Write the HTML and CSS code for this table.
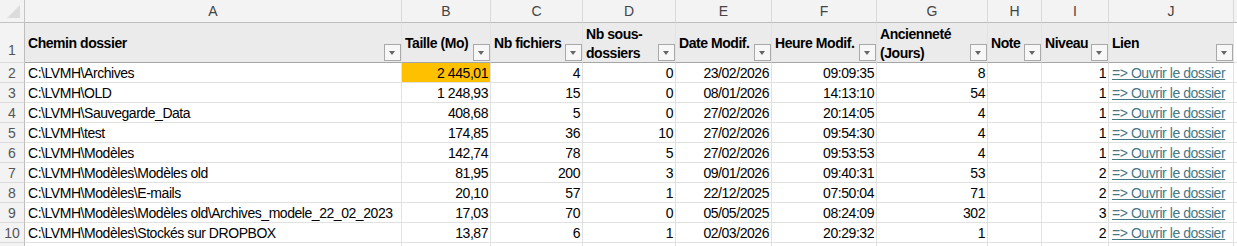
FILE: index.html
```html
<!DOCTYPE html>
<html lang="fr">
<head>
<meta charset="utf-8">
<link rel="stylesheet" href="styles.css">
</head>
<body>
<div class="sheet">
  <div class="corner"><span class="tri"></span></div>
  <div class="ch">A</div><div class="ch">B</div><div class="ch">C</div><div class="ch">D</div><div class="ch">E</div><div class="ch">F</div><div class="ch">G</div><div class="ch">H</div><div class="ch">I</div><div class="ch">J</div><div class="ch last"></div>

  <div class="rh rh1">1</div>
  <div class="th"><span class="lbl">Chemin dossier</span><span class="flt"></span></div>
  <div class="th"><span class="lbl">Taille (Mo)</span><span class="flt"></span></div>
  <div class="th"><span class="lbl">Nb fichiers</span><span class="flt"></span></div>
  <div class="th"><span class="lbl">Nb sous-<br>dossiers</span><span class="flt"></span></div>
  <div class="th"><span class="lbl">Date Modif.</span><span class="flt"></span></div>
  <div class="th"><span class="lbl">Heure Modif.</span><span class="flt"></span></div>
  <div class="th"><span class="lbl">Ancienneté<br>(Jours)</span><span class="flt"></span></div>
  <div class="th"><span class="lbl">Note</span><span class="flt"></span></div>
  <div class="th"><span class="lbl">Niveau</span><span class="flt"></span></div>
  <div class="th"><span class="lbl">Lien</span><span class="flt"></span></div>
  <div class="th last"></div>

  <div class="rh">2</div><div class="c">C:\LVMH\Archives</div><div class="c n hl">2 445,01</div><div class="c n">4</div><div class="c n">0</div><div class="c n">23/02/2026</div><div class="c n">09:09:35</div><div class="c n">8</div><div class="c"></div><div class="c n">1</div><div class="c"><a class="lk">=&gt; Ouvrir le dossier</a></div><div class="c last"></div>
  <div class="rh">3</div><div class="c">C:\LVMH\OLD</div><div class="c n">1 248,93</div><div class="c n">15</div><div class="c n">0</div><div class="c n">08/01/2026</div><div class="c n">14:13:10</div><div class="c n">54</div><div class="c"></div><div class="c n">1</div><div class="c"><a class="lk">=&gt; Ouvrir le dossier</a></div><div class="c last"></div>
  <div class="rh">4</div><div class="c">C:\LVMH\Sauvegarde_Data</div><div class="c n">408,68</div><div class="c n">5</div><div class="c n">0</div><div class="c n">27/02/2026</div><div class="c n">20:14:05</div><div class="c n">4</div><div class="c"></div><div class="c n">1</div><div class="c"><a class="lk">=&gt; Ouvrir le dossier</a></div><div class="c last"></div>
  <div class="rh">5</div><div class="c">C:\LVMH\test</div><div class="c n">174,85</div><div class="c n">36</div><div class="c n">10</div><div class="c n">27/02/2026</div><div class="c n">09:54:30</div><div class="c n">4</div><div class="c"></div><div class="c n">1</div><div class="c"><a class="lk">=&gt; Ouvrir le dossier</a></div><div class="c last"></div>
  <div class="rh">6</div><div class="c">C:\LVMH\Modèles</div><div class="c n">142,74</div><div class="c n">78</div><div class="c n">5</div><div class="c n">27/02/2026</div><div class="c n">09:53:53</div><div class="c n">4</div><div class="c"></div><div class="c n">1</div><div class="c"><a class="lk">=&gt; Ouvrir le dossier</a></div><div class="c last"></div>
  <div class="rh">7</div><div class="c">C:\LVMH\Modèles\Modèles old</div><div class="c n">81,95</div><div class="c n">200</div><div class="c n">3</div><div class="c n">09/01/2026</div><div class="c n">09:40:31</div><div class="c n">53</div><div class="c"></div><div class="c n">2</div><div class="c"><a class="lk">=&gt; Ouvrir le dossier</a></div><div class="c last"></div>
  <div class="rh">8</div><div class="c">C:\LVMH\Modèles\E-mails</div><div class="c n">20,10</div><div class="c n">57</div><div class="c n">1</div><div class="c n">22/12/2025</div><div class="c n">07:50:04</div><div class="c n">71</div><div class="c"></div><div class="c n">2</div><div class="c"><a class="lk">=&gt; Ouvrir le dossier</a></div><div class="c last"></div>
  <div class="rh">9</div><div class="c">C:\LVMH\Modèles\Modèles old\Archives_modele_22_02_2023</div><div class="c n">17,03</div><div class="c n">70</div><div class="c n">0</div><div class="c n">05/05/2025</div><div class="c n">08:24:09</div><div class="c n">302</div><div class="c"></div><div class="c n">3</div><div class="c"><a class="lk">=&gt; Ouvrir le dossier</a></div><div class="c last"></div>
  <div class="rh">10</div><div class="c">C:\LVMH\Modèles\Stockés sur DROPBOX</div><div class="c n">13,87</div><div class="c n">6</div><div class="c n">1</div><div class="c n">02/03/2026</div><div class="c n">20:29:32</div><div class="c n">1</div><div class="c"></div><div class="c n">2</div><div class="c"><a class="lk">=&gt; Ouvrir le dossier</a></div><div class="c last"></div>
  <div class="rh"></div><div class="c"></div><div class="c"></div><div class="c"></div><div class="c"></div><div class="c"></div><div class="c"></div><div class="c"></div><div class="c"></div><div class="c"></div><div class="c"></div><div class="c last"></div>
</div>
</body>
</html>
```

FILE: styles.css
```css
html, body {
  margin: 0;
  padding: 0;
  background: #ffffff;
}
body {
  font-family: "Liberation Sans", Arial, sans-serif;
  font-size: 14px;
  letter-spacing: -0.45px;
  color: #000;
  overflow: hidden;
}
.sheet {
  display: grid;
  grid-template-columns: 25px 377px 89px 92px 93px 96px 105px 111px 54px 67px 125px 1fr;
  grid-template-rows: 23px 40px repeat(9, 20px) 20px;
  width: 1237px;
  height: 246px;
  overflow: hidden;
}
.sheet > div {
  box-sizing: border-box;
  overflow: hidden;
  white-space: nowrap;
}
.corner {
  background: #f3f3f3;
  border-right: 1px solid #c4c4c4;
  border-bottom: 1px solid #c4c4c4;
  position: relative;
}
.tri {
  position: absolute;
  right: 4px;
  bottom: 4px;
  width: 0;
  height: 0;
  border-left: 13px solid transparent;
  border-bottom: 13px solid #dcdcdc;
}
.ch {
  background: #f3f3f3;
  border-right: 1px solid #dadada;
  border-bottom: 1px solid #bdbdbd;
  text-align: center;
  line-height: 23px;
  color: #444;
  font-size: 14px;
  letter-spacing: 0;
}
.rh {
  background: #f3f3f3;
  border-right: 1px solid #bdbdbd;
  border-bottom: 1px solid #dadada;
  text-align: center;
  color: #555;
  font-size: 14px;
  letter-spacing: 0;
  padding-top: 1px;
  line-height: 19px;
}
.rh1 {
  display: flex;
  align-items: flex-end;
  justify-content: center;
  padding-bottom: 2px;
}
.th {
  background: #ebebeb;
  border-bottom: 1px solid #a6a6a6;
  border-right: 1px solid #e3e3e3;
  position: relative;
  display: flex;
  align-items: center;
  padding: 2px 0 0 3px;
  font-weight: bold;
  line-height: 19px;
}
.lbl {
  white-space: nowrap;
}
.flt {
  position: absolute;
  right: 0;
  bottom: 1px;
  width: 17px;
  height: 17px;
  box-sizing: border-box;
  border: 1px solid #a9a9a9;
  background: #f7f7f7;
}
.flt::after {
  content: "";
  position: absolute;
  left: 4px;
  top: 6px;
  border-left: 3.5px solid transparent;
  border-right: 3.5px solid transparent;
  border-top: 4px solid #666;
}
.c {
  border-right: 1px solid #e1e1e1;
  border-bottom: 1px solid #e1e1e1;
  padding: 1px 2px 0 3px;
  line-height: 19px;
}
.n {
  text-align: right;
}
.hl {
  background: #ffc000;
}
.lk {
  color: #467886;
  text-decoration: underline;
}
.last {
  border-right: none;
  background: transparent;
}
.ch.last {
  background: #f3f3f3;
}
.th.last {
  background: #fff;
  border-bottom: 1px solid #e1e1e1;
}
```
